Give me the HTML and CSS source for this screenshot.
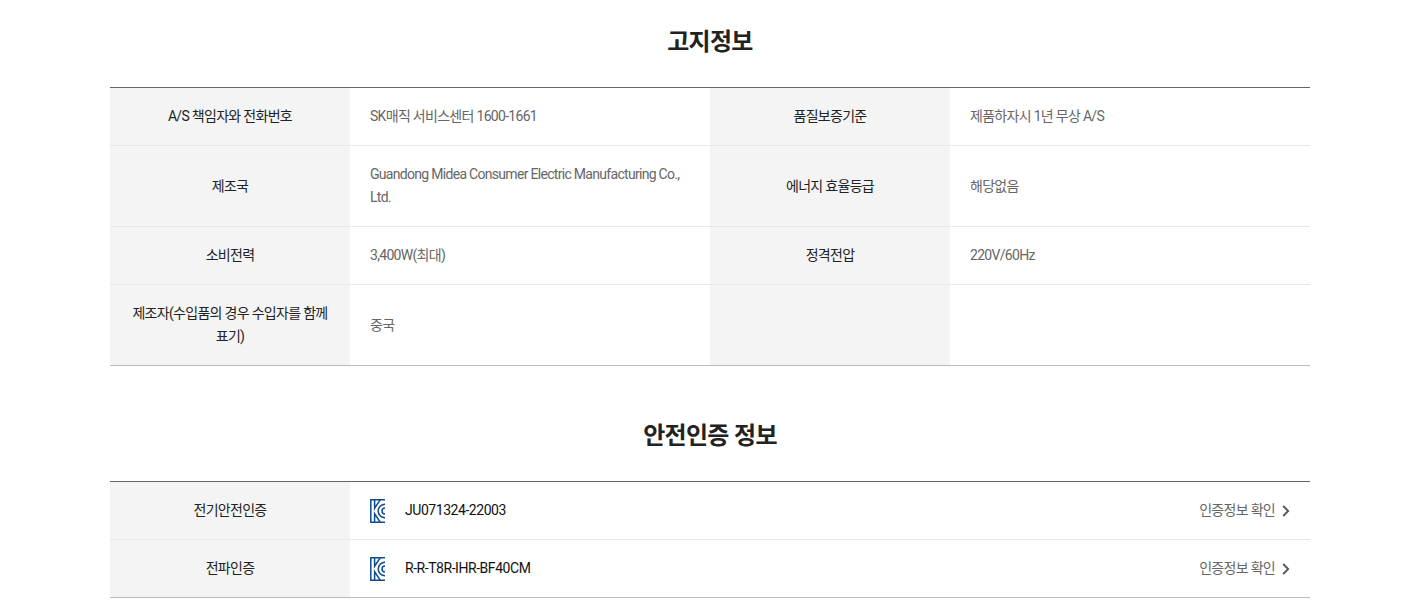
FILE: index.html
```html
<!DOCTYPE html>
<html lang="ko">
<head>
<meta charset="utf-8">
<title>고지정보</title>
<link rel="stylesheet" href="styles.css">
</head>
<body>
<main class="page">
  <section class="section">
    <h2 class="title">고지정보</h2>
    <table class="info">
      <colgroup><col class="c-h"><col class="c-d"><col class="c-h"><col class="c-d"></colgroup>
      <tbody>
        <tr><th>A/S 책임자와 전화번호</th><td>SK매직 서비스센터 1600-1661</td><th>품질보증기준</th><td>제품하자시 1년 무상 A/S</td></tr>
        <tr><th>제조국</th><td>Guandong Midea Consumer Electric Manufacturing Co., Ltd.</td><th>에너지 효율등급</th><td>해당없음</td></tr>
        <tr><th>소비전력</th><td>3,400W(최대)</td><th>정격전압</th><td>220V/60Hz</td></tr>
        <tr><th>제조자(수입품의 경우 수입자를 함께 표기)</th><td>중국</td><th></th><td></td></tr>
      </tbody>
    </table>
  </section>
  <section class="section second">
    <h2 class="title">안전인증 정보</h2>
    <table class="info">
      <colgroup><col class="c-h"><col></colgroup>
      <tbody>
        <tr><th>전기안전인증</th><td><div class="cert">
          <svg class="kc" viewBox="0 0 15 24" width="15" height="24"><path fill="none" stroke="#0f4a8f" stroke-width="1.5" d="M15 .8H.8v22.4H15M4.6 .8v8.4L10.2 .8M4.6 23.2v-8.4l5.6 8.4M15 5.2a6.8 6.8 0 0 0 0 13.6M15 9a3 3 0 0 0 0 6"/></svg>
          <span class="num">JU071324-22003</span><a class="link" href="#">인증정보 확인<svg class="chev" viewBox="0 0 8 12" width="8" height="12"><path fill="none" stroke="#555" stroke-width="1.8" d="M1.2 1l5 5-5 5"/></svg></a></div></td></tr>
        <tr><th>전파인증</th><td><div class="cert">
          <svg class="kc" viewBox="0 0 15 24" width="15" height="24"><path fill="none" stroke="#0f4a8f" stroke-width="1.5" d="M15 .8H.8v22.4H15M4.6 .8v8.4L10.2 .8M4.6 23.2v-8.4l5.6 8.4M15 5.2a6.8 6.8 0 0 0 0 13.6M15 9a3 3 0 0 0 0 6"/></svg>
          <span class="num">R-R-T8R-IHR-BF40CM</span><a class="link" href="#">인증정보 확인<svg class="chev" viewBox="0 0 8 12" width="8" height="12"><path fill="none" stroke="#555" stroke-width="1.8" d="M1.2 1l5 5-5 5"/></svg></a></div></td></tr>
      </tbody>
    </table>
  </section>
</main>
</body>
</html>
```
FILE: styles.css
```css
* { box-sizing: border-box; }
html, body { margin: 0; padding: 0; background: #fff; }
body {
  font-family: Roboto, "Noto Sans CJK KR", sans-serif;
  font-size: 14px;
  color: #222;
  letter-spacing: -0.7px;
}
.page { width: 1200px; margin-left: 110px; }
.second { margin-top: 28px; }
.title {
  margin: 0;
  height: 87px;
  padding-top: 25px;
  text-align: center;
  font-size: 24px;
  line-height: 35px;
  font-weight: 700;
  color: #222;
  letter-spacing: -0.7px;
}
.info {
  width: 100%;
  table-layout: fixed;
  border-collapse: separate;
  border-spacing: 0;
  border-top: 1px solid #666;
  border-bottom: 1px solid #bbb;
}
.c-h { width: 240px; }
.c-d { width: 360px; }
.info th, .info td {
  padding: 17px 20px;
  line-height: 23px;
  vertical-align: middle;
  border-bottom: 1px solid #e8e8e8;
}
.info tr:last-child th, .info tr:last-child td { border-bottom: 0; }
.info th {
  background: #f4f4f4;
  font-weight: 400;
  text-align: center;
  color: #222;
}
.info td { color: #666; }
.cert { display: flex; align-items: center; height: 23px; }
.kc { flex: none; }
.num { margin-left: 20px; color: #111; font-weight: 400; letter-spacing: -0.45px; }
.link {
  margin-left: auto;
  display: flex;
  align-items: center;
  color: #666;
  text-decoration: none;
}
.chev { margin-left: 7px; }
```
